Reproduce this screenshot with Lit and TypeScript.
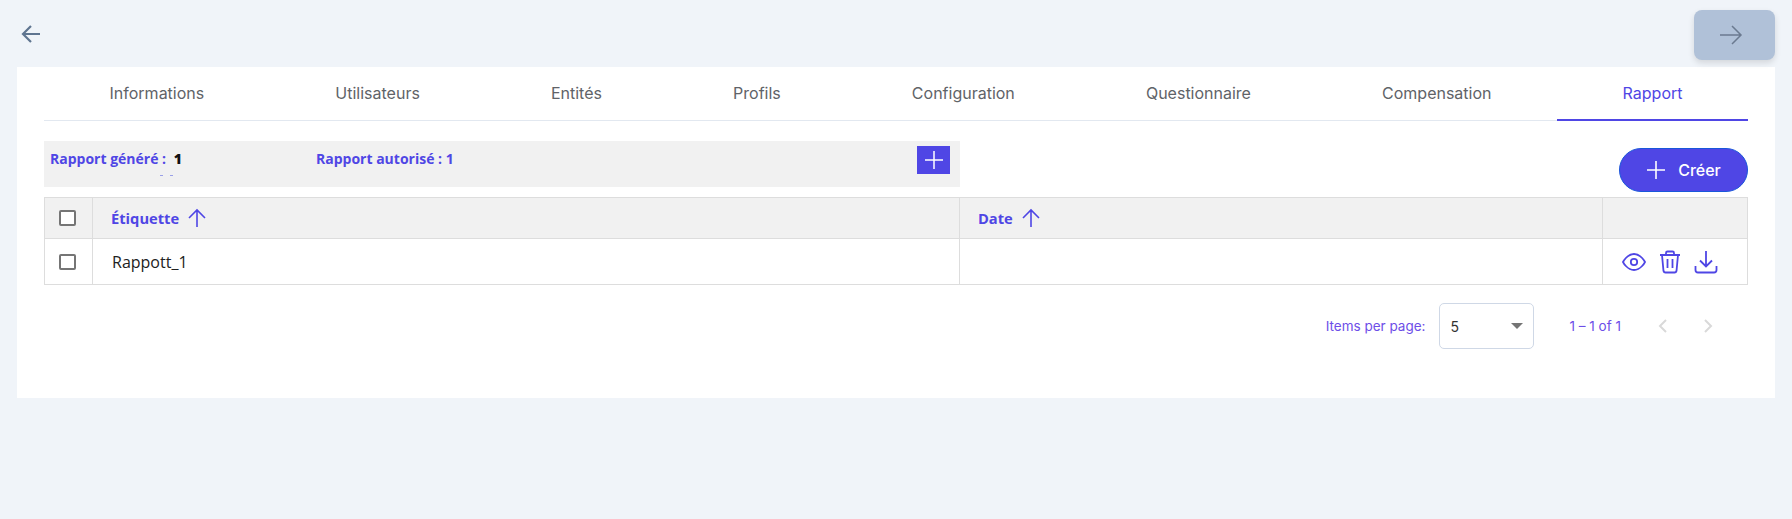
import { LitElement, html, css } from "lit";
import { customElement } from "lit/decorators.js";

const up = html`<svg class="sort" width="20" height="20" viewBox="0 0 20 20" fill="none" stroke="currentColor" stroke-width="1.6"><path d="M10 19V2M2 10l8-8 8 8"/></svg>`;

@customElement("app-root")
export class AppRoot extends LitElement {
  static styles = css`
    :host { display: block; height: 519px; background: #f0f4f9; font-family: "Open Sans", sans-serif; overflow: hidden; }
    .top { height: 67px; padding: 10px 17px 0; box-sizing: border-box; display: flex; justify-content: space-between; align-items: flex-start; }
    .back { margin: 14px 0 0 4px; color: #5f7590; display: flex; }
    .next { width: 81px; height: 50px; border-radius: 8px; background: #b0c1d8; box-shadow: 0 3px 6px rgba(0,0,0,.12); display: flex; align-items: center; justify-content: center; color: #6b7a90; padding-right: 8px; box-sizing: border-box; }
    .card { margin: 0 17px; height: 331px; background: #fff; padding: 0 27px; box-sizing: border-box; }
    .tabs { display: flex; height: 53px; border-bottom: 1px solid #e2e8f0; font-family: Inter, sans-serif; font-size: 16px; color: #5f6368; }
    .tab { flex: 1 1 auto; display: flex; align-items: center; justify-content: center; padding: 0 50px 2px; box-sizing: border-box; }
    .tab.on { color: #4f46e5; border-bottom: 2px solid #4f46e5; margin-bottom: -1px; padding-bottom: 1px; }
    .bar { display: flex; align-items: flex-start; margin-top: 20px; height: 51px; }
    .stats { position: relative; width: 916px; height: 46px; background: #f1f1f1; display: flex; padding: 0 10px 0 6px; box-sizing: border-box; font-size: 14px; font-weight: 700; color: #4f46e5; }
    .s1 { width: 266px; padding-top: 8px; }
    .s1 b { color: #111; margin-left: 4px; }
    .s2 { flex: 1; padding-top: 8px; }
    .plus { width: 33px; height: 28px; margin-top: 5px; background: #4f46e5; color: #fff; display: flex; align-items: center; justify-content: center; }
    .ticks { position: absolute; left: 116px; top: 34px; display: flex; gap: 7px; }
    .ticks i { width: 3px; height: 1px; background: #9aa0e8; }
    .create { margin: 7px 0 0 auto; width: 129px; height: 44px; border-radius: 22px; box-sizing: border-box; border: 1px solid #1a56db; background: #4f46e5; color: #fff; font-family: Inter, sans-serif; font-size: 16px; font-weight: 500; display: flex; align-items: center; justify-content: center; gap: 12px; }
    .table { margin-top: 5px; border: 1px solid #ddd; display: grid; grid-template-columns: 48px 867px 643px 1fr; grid-template-rows: 41px 45px; }
    .c { border-right: 1px solid #ddd; display: flex; align-items: center; box-sizing: border-box; }
    .c:nth-child(4n) { border-right: 0; }
    .h { background: #f1f1f1; border-bottom: 1px solid #ddd; color: #4f46e5; font-size: 14.7px; font-weight: 700; padding-left: 18px; gap: 8px; }
    .chk { padding-left: 14px; }
    .box { width: 17px; height: 16px; border: 2px solid #757575; border-radius: 2px; box-sizing: border-box; background: #fff; }
    .name { padding-left: 19px; font-size: 16px; color: #212121; }
    .acts { color: #4f46e5; padding-left: 19px; gap: 13px; }
    .pager { display: flex; align-items: center; justify-content: flex-end; margin-top: 18px; font-family: Inter, sans-serif; font-size: 13.5px; color: #6d4ee8; height: 46px; }
    .sel { width: 95px; height: 46px; margin: 0 35px 0 14px; border: 1px solid #cfd8e6; border-radius: 5px; box-sizing: border-box; display: flex; align-items: center; justify-content: space-between; padding: 0 10px; color: #333; font-size: 14px; }
    .caret { width: 0; height: 0; border: 6px solid transparent; border-top: 6px solid #757575; border-bottom: 0; }
    .nav { color: #d9d9d9; display: flex; gap: 31px; margin: 0 33px 0 35px; }
  `;

  render() {
    const tabs = ["Informations","Utilisateurs","Entités","Profils","Configuration","Questionnaire","Compensation","Rapport"];
    return html`
      <div class="top">
        <div class="back"><svg width="20" height="20" viewBox="0 0 20 20" fill="none" stroke="currentColor" stroke-width="2.2"><path d="M19 10H2M10 2l-8 8 8 8"/></svg></div>
        <div class="next"><svg width="24" height="22" viewBox="0 0 24 22" fill="none" stroke="currentColor" stroke-width="1.5"><path d="M1 11h21M13 2l9 9-9 9"/></svg></div>
      </div>
      <div class="card">
        <div class="tabs">${tabs.map((t,i)=>html`<div class="tab ${i===7?"on":""}">${t}</div>`)}</div>
        <div class="bar">
          <div class="stats">
            <div class="s1">Rapport généré : <b>1</b></div>
            <div class="s2">Rapport autorisé : 1</div>
            <div class="plus"><svg width="20" height="20" viewBox="0 0 20 20" fill="none" stroke="currentColor" stroke-width="1.5"><path d="M10 1v18M1 10h18"/></svg></div>
            <div class="ticks"><i></i><i></i></div>
          </div>
          <div class="create"><svg width="20" height="20" viewBox="0 0 20 20" fill="none" stroke="currentColor" stroke-width="1.6"><path d="M10 1v18M1 10h18"/></svg>Créer</div>
        </div>
        <div class="table">
          <div class="c h chk"><span class="box"></span></div>
          <div class="c h">Étiquette ${up}</div>
          <div class="c h">Date ${up}</div>
          <div class="c h"></div>
          <div class="c chk"><span class="box"></span></div>
          <div class="c name">Rappott_1</div>
          <div class="c"></div>
          <div class="c acts">
            <svg width="24" height="24" viewBox="0 0 24 24" fill="none" stroke="currentColor" stroke-width="1.8"><path d="M1 12s4-8 11-8 11 8 11 8-4 8-11 8S1 12 1 12z"/><circle cx="12" cy="12" r="3.2"/></svg>
            <svg width="22" height="24" viewBox="0 0 22 24" fill="none" stroke="currentColor" stroke-width="1.8"><path d="M1 5h20M7 5V3a1.5 1.5 0 0 1 1.5-1.5h5A1.5 1.5 0 0 1 15 3v2M3 5l1.5 16a2 2 0 0 0 2 1.5h9a2 2 0 0 0 2-1.5L19 5M8.5 9v9M13.5 9v9"/></svg>
            <svg width="24" height="24" viewBox="0 0 24 24" fill="none" stroke="currentColor" stroke-width="1.8"><path d="M12 1v15M6 10.5l6 6 6-6M1.5 16v4a2.5 2.500 0 0 0 2.5 2.5h16a2.5 2.5 0 0 0 2.5-2.5v-4"/></svg>
          </div>
        </div>
        <div class="pager">
          <span>Items per page:</span>
          <div class="sel">5<span class="caret"></span></div>
          <span>1 – 1 of 1</span>
          <div class="nav">
            <svg width="14" height="16" viewBox="0 0 14 16" fill="none" stroke="currentColor" stroke-width="2"><path d="M10 2L4 8l6 6"/></svg>
            <svg width="14" height="16" viewBox="0 0 14 16" fill="none" stroke="currentColor" stroke-width="2"><path d="M4 2l6 6-6 6"/></svg>
          </div>
        </div>
      </div>`;
  }
}
